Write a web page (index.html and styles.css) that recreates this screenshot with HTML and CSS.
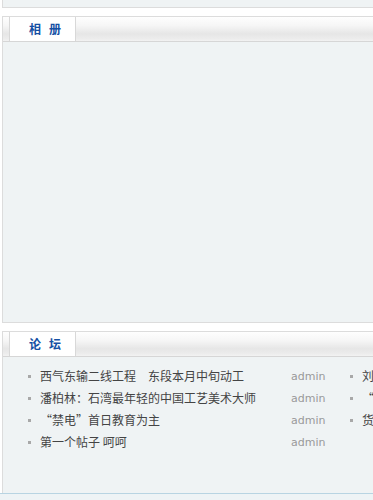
FILE: index.html
```html
<!DOCTYPE html>
<html lang="zh">
<head>
<meta charset="utf-8">
<title>相册 论坛</title>
<link rel="stylesheet" href="styles.css">
</head>
<body>
<div class="page">
  <div class="box-top"></div>

  <div class="box">
    <div class="box-head">
      <div class="tab"><span>相</span><span>册</span></div>
    </div>
    <div class="box-body album"></div>
  </div>

  <div class="box box-last">
    <div class="box-head">
      <div class="tab"><span>论</span><span>坛</span></div>
    </div>
    <div class="box-body forum">
      <ul class="col">
        <li><i class="dot"></i><span class="title">西气东输二线工程　东段本月中旬动工</span><span class="author">admin</span></li>
        <li><i class="dot"></i><span class="title">潘柏林：石湾最年轻的中国工艺美术大师</span><span class="author">admin</span></li>
        <li><i class="dot"></i><span class="title">“禁电”首日教育为主</span><span class="author">admin</span></li>
        <li><i class="dot"></i><span class="title">第一个帖子 呵呵</span><span class="author">admin</span></li>
      </ul>
      <ul class="col">
        <li><i class="dot"></i><span class="title">刘翔因伤退出比赛</span><span class="author">admin</span></li>
        <li><i class="dot"></i><span class="title">“三鹿”奶粉事件调查</span><span class="author">admin</span></li>
        <li><i class="dot"></i><span class="title">货币政策适度宽松</span><span class="author">admin</span></li>
      </ul>
    </div>
  </div>
</div>
<div class="footer"></div>
</body>
</html>
```

FILE: styles.css
```css
html, body {
  margin: 0;
  padding: 0;
  background: #ffffff;
  overflow: hidden;
  font-family: "Noto Sans CJK SC", "Noto Sans", sans-serif;
}

.page {
  padding-left: 2px;
  width: 720px;
}

.box-top {
  height: 7px;
  background: #eff3f4;
  border-left: 1px solid #dcdcdc;
  border-bottom: 1px solid #dcdcdc;
  margin-bottom: 8px;
}

.box {
  border: 1px solid #dcdcdc;
  margin-bottom: 8px;
}

.box-last {
  border-bottom: none;
  margin-bottom: 0;
}

.box-head {
  height: 24px;
  border-bottom: 1px solid #d6d6d6;
  background: linear-gradient(#fefefe 0%, #f6f6f6 35%, #e6e6e6 70%, #ececec 90%, #f2f2f2 100%);
  padding-left: 6px;
  display: flex;
}

.tab {
  background: #ffffff;
  border-left: 1px solid #d8d8d8;
  border-right: 1px solid #d8d8d8;
  display: flex;
  align-items: center;
  gap: 8px;
  padding-left: 19px;
  width: 46px;
  font-size: 12px;
  font-weight: bold;
  color: #1550a3;
  line-height: 24px;
}

.box-body {
  background: #eff3f4;
}

.album {
  height: 280px;
}

.forum {
  height: 129px;
  padding-top: 7px;
  padding-left: 23px;
  display: flex;
}

.col {
  list-style: none;
  margin: 0;
  padding: 0;
  width: 322px;
}

.col li {
  display: flex;
  align-items: center;
  height: 22px;
  font-size: 12px;
  color: #444444;
}

.dot {
  width: 3px;
  height: 3px;
  background: #a8a8a8;
  margin: 3px 9px 0 2px;
  flex: none;
}

.title {
  width: 251px;
  flex: none;
  white-space: nowrap;
  overflow: hidden;
}

.author {
  font-family: "DejaVu Sans", sans-serif;
  font-size: 11px;
  color: #999999;
  padding-top: 2px;
}

.footer {
  border-top: 1px solid #b8d4e2;
  background: #eef3f5;
  height: 40px;
}
```
